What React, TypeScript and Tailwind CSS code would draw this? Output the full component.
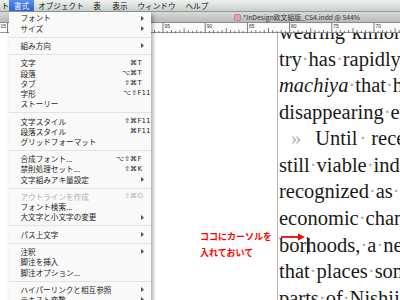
import React from "react";

type Item =
  | { label: string; mods?: string; keyName?: string; sub?: boolean; disabled?: boolean }
  | "sep";

const items: Item[] = [
  { label: "フォント", sub: true },
  { label: "サイズ", sub: true },
  "sep",
  { label: "組み方向", sub: true },
  "sep",
  { label: "文字", mods: "⌘", keyName: "T" },
  { label: "段落", mods: "⌥⌘", keyName: "T" },
  { label: "タブ", mods: "⇧⌘", keyName: "T" },
  { label: "字形", mods: "⌥⇧", keyName: "F11" },
  { label: "ストーリー" },
  "sep",
  { label: "文字スタイル", mods: "⇧⌘", keyName: "F11" },
  { label: "段落スタイル", mods: "⌘", keyName: "F11" },
  { label: "グリッドフォーマット" },
  "sep",
  { label: "合成フォント...", mods: "⌥⇧⌘", keyName: "F" },
  { label: "禁則処理セット...", mods: "⇧⌘", keyName: "K" },
  { label: "文字組みアキ量設定", sub: true },
  "sep",
  { label: "アウトラインを作成", mods: "⇧⌘", keyName: "O", disabled: true },
  { label: "フォント検索..." },
  { label: "大文字と小文字の変更", sub: true },
  "sep",
  { label: "パス上文字", sub: true },
  "sep",
  { label: "注釈", sub: true },
  { label: "脚注を挿入" },
  { label: "脚注オプション..." },
  "sep",
  { label: "ハイパーリンクと相互参照", sub: true },
  { label: "テキスト変数", sub: true },
];

const jp = "font-['Noto_Sans_CJK_JP',sans-serif]";

function Dot() {
  return <span className="text-[#a8a8a8]">·</span>;
}

function Ruler() {
  const ticks: React.ReactNode[] = [];
  const labels: React.ReactNode[] = [];
  for (let i = -80; i <= 60; i++) {
    const x = 163 + i * 4.22;
    if (x < 9 || x > 400) continue;
    const major = i % 10 === 0;
    const mid = i % 5 === 0;
    const unit = i % 2 === 0;
    const h = major ? 10 : mid ? 5 : unit ? 3 : 2;
    ticks.push(<line key={i} x1={x} x2={x} y1={10 - h} y2={10} stroke="#444" strokeWidth={0.7} />);
    if (major) {
      labels.push(
        <text key={"t" + i} x={x + 1.5} y={5} fontSize={5} fill="#333" fontFamily="Liberation Sans, sans-serif">
          {95 - i / 2}
        </text>
      );
    }
  }
  return (
    <div className="h-[10px] border-b border-[#9a9a9a] bg-[#fbfbfb]">
      <svg width="400" height="10" className="block">
        {ticks}
        {labels}
        <text x={0.5} y={5} fontSize={5} fill="#333" fontFamily="Liberation Sans, sans-serif">15</text>
        <line x1={7.5} x2={7.5} y1={0} y2={10} stroke="#444" strokeWidth={0.7} />
      </svg>
    </div>
  );
}

function Menu() {
  return (
    <div className={`absolute left-[9px] top-[12px] w-[142px] h-[300px] bg-[#f9f9f9] shadow-[2px_2px_4px_rgba(0,0,0,0.35)] pt-[1.2px] ${jp}`}>
      {items.map((it, i) =>
        it === "sep" ? (
          <div key={i} className="h-[7.2px] flex items-center">
            <div className="h-px w-full bg-[#e2e2e2]" />
          </div>
        ) : (
          <div
            key={i}
            className={`flex items-center h-[10.2px] pl-[11.5px] pr-[3px] text-[7.6px] leading-none ${
              it.disabled ? "text-[#b0b0b0]" : "text-[#1c1c1c]"
            }`}
          >
            <span className="flex-1 whitespace-nowrap">{it.label}</span>
            {it.keyName && (
              <span className="flex font-['DejaVu_Sans',sans-serif] text-[7px]">
                <span className="text-right">{it.mods}</span>
                <span className="w-[11px] pl-[0.5px]">{it.keyName}</span>
              </span>
            )}
            {it.sub && (
              <svg width="3" height="5" className="mr-[4px]">
                <polygon points="0,0 3,2.5 0,5" fill="#555" />
              </svg>
            )}
          </div>
        )
      )}
    </div>
  );
}

export default function App() {
  return (
    <div className="relative w-[400px] h-[300px] overflow-hidden bg-white">
      {/* Menu bar */}
      <div className={`flex items-center h-[12px] bg-gradient-to-b from-[#eef2ef] to-[#c8d1cc] border-b border-[#8f9893] text-[7.6px] leading-none text-[#111] ${jp}`}>
        <span className="w-[9px] overflow-hidden whitespace-nowrap text-right">ト</span>
        <span className="h-full flex items-center px-[5px] bg-gradient-to-b from-[#5b8ef0] to-[#2d5fd6] text-white">書式</span>
        <span className="ml-[4px]">オブジェクト</span>
        <span className="ml-[9.5px]">表</span>
        <span className="ml-[11.5px]">表示</span>
        <span className="ml-[10px]">ウィンドウ</span>
        <span className="ml-[10px]">ヘルプ</span>
      </div>

      {/* Title bar */}
      <div className="flex items-center h-[11px] bg-gradient-to-b from-[#dadada] to-[#b9b9b9] border-b border-[#8c8c8c] pl-[234px]">
        <svg width="7" height="7" className="mr-[2px]">
          <rect x="0.5" y="0.5" width="6" height="6" rx="1" fill="#e89bb4" stroke="#b5607e" strokeWidth="0.6" />
        </svg>
        <span className={`text-[6.8px] leading-none text-[#333] whitespace-nowrap ${jp}`}>*InDesign欧文組版_CS4.indd @ 544%</span>
      </div>

      <Ruler />

      {/* Document */}
      <div className="flex h-[267px] overflow-hidden">
        <div className="w-[278px] shrink-0 border-r border-[#b4b4b4] bg-white" />
        <div className="flex-1 pl-[1px] overflow-hidden">
          <div className="mt-[-14.1px] font-['Liberation_Serif',serif] text-[20.5px] leading-[26.6px] text-[#1a1a1a] whitespace-nowrap">
            <div>wearing<Dot />kimono,</div>
            <div>try<Dot />has<Dot />rapidly</div>
            <div><i>machiya</i><Dot />that<Dot />has</div>
            <div>disappearing<Dot />even</div>
            <div><span className="ml-[12px] text-[#b0b0b0]">»</span><span className="ml-[14px]">Until</span><span className="ml-[2px]"><Dot /></span><span className="ml-[5px]">recently</span></div>
            <div>still<Dot />viable<Dot />industry</div>
            <div>recognized<Dot />as<Dot />a</div>
            <div>economic<Dot />changes</div>
            <div>
              bor
              <span className="relative inline-block w-0">
                <span className="absolute left-[0.5px] top-[-15px] w-px h-[17px] bg-[#222]" />
              </span>
              hoods,<Dot />a<Dot />new
            </div>
            <div>that<Dot />places<Dot />some</div>
            <div>parts<Dot />of<Dot />Nishijin</div>
          </div>
        </div>
      </div>

      <Menu />

      {/* Annotation */}
      <div className={`absolute left-[200px] top-[229px] text-[9px] leading-[16px] font-bold text-[#f00] ${jp}`}>
        <div>ココにカーソルを</div>
        <div>入れておいて</div>
      </div>
      <svg width="26" height="8" className="absolute left-[281px] top-[233px]">
        <line x1="0" y1="4" x2="19" y2="4" stroke="#f00" strokeWidth="1.8" />
        <polygon points="17,0.5 24,4 17,7.5" fill="#f00" />
      </svg>
    </div>
  );
}
